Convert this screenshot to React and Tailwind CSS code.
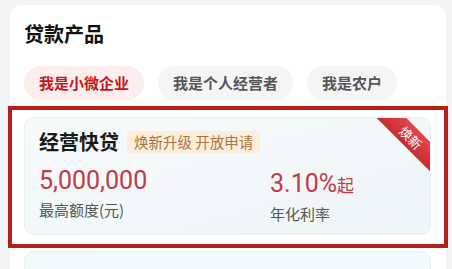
const TABS = ['我是小微企业', '我是个人经营者', '我是农户'];

const font = { fontFamily: '"Noto Sans CJK SC", "Noto Sans", sans-serif' };

function ProductCard({ title, badge, amount, rate, ribbon }) {
  return (
    <div className="relative w-[407px] overflow-hidden rounded-[10px] border border-[#e8eef1] bg-gradient-to-br from-[#f7fafb] to-[#eef5f7] pl-[14px] pt-[10px] pb-[9px]">
      {ribbon && (
        <div className="absolute right-[-21px] top-[9px] flex h-[21px] w-[80px] rotate-45 items-center justify-center bg-gradient-to-b from-[#e0464a] to-[#c92c31] text-[13px] leading-none text-white">
          {ribbon}
        </div>
      )}
      <div className="flex items-center gap-[8px]">
        <span className="text-[20px] font-bold leading-[28px] text-[#1a1a1a]">{title}</span>
        <span className="rounded-[3px] bg-[#fdeedc] px-[7px] text-[14.5px] leading-[22px] text-[#a9743f]">
          {badge}
        </span>
      </div>
      <div className="mt-[10px] flex">
        <div className="w-[231px]">
          <div className="text-[25px] leading-[30px] text-[#c03a47]" style={{ fontFamily: 'Roboto, sans-serif' }}>
            {amount}
          </div>
          <div className="mt-[3px] text-[15px] leading-[22px] text-[#555]">最高额度(元)</div>
        </div>
        <div>
          <div className="text-[25px] leading-[30px] text-[#c03a47]">
            <span style={{ fontFamily: 'Roboto, sans-serif' }}>{rate}</span>
            <span className="text-[17px]">起</span>
          </div>
          <div className="mt-[3px] text-[15px] leading-[22px] text-[#555]">年化利率</div>
        </div>
      </div>
    </div>
  );
}

export default function App() {
  return (
    <div className="h-[269px] overflow-hidden bg-[#f3f4f6] pt-[5px]" style={font}>
      <div className="ml-[10px] w-[436px] rounded-[12px] bg-white pl-[14px] pt-[15px] pb-[20px]">
        <h2 className="text-[20px] font-bold leading-[28px] text-[#111]">贷款产品</h2>

        {/* tabs */}
        <div className="mt-[18px] flex gap-[14px]">
          {TABS.map((t, i) => (
            <div
              key={t}
              className={`h-[34px] rounded-full px-[15px] text-[15px] font-bold leading-[34px] ${
                i === 0 ? 'bg-[#fdeeee] text-[#c3161d]' : 'bg-[#f5f5f6] text-[#555]'
              }`}
            >
              {t}
            </div>
          ))}
        </div>

        {/* highlighted product */}
        <div className="mt-[6px] -ml-[16px] w-[440px] border-[4px] border-[#b51f18] pl-[12px] pt-[7px] pb-[9px]">
          <ProductCard
            title="经营快贷"
            badge="焕新升级 开放申请"
            amount="5,000,000"
            rate="3.10%"
            ribbon="焕新"
          />
        </div>

        {/* next product, mostly below the fold */}
        <div className="mt-[3px] h-[120px] w-[407px] rounded-[10px] border border-[#e8eef1] bg-gradient-to-br from-[#f1fafb] to-[#f6fafb]" />
      </div>
    </div>
  );
}
